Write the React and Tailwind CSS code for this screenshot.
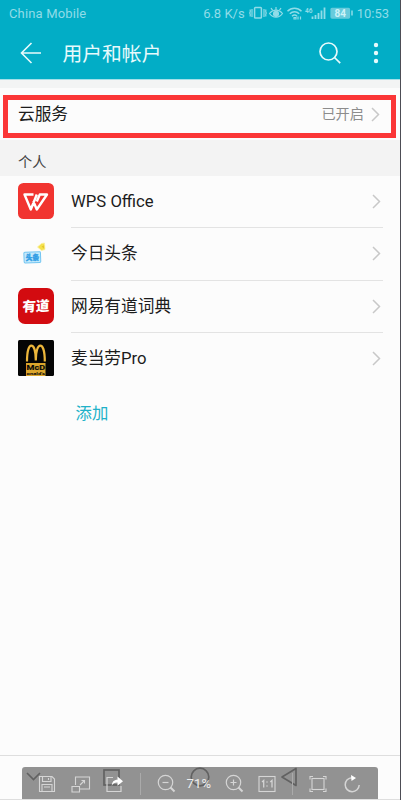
import { useState } from "react"

const WpsLogo = () => (
  <svg width="36" height="36" viewBox="0 0 36 36" fill="none">
    <rect width="36" height="36" rx="5.5" fill="#f13430" />
    <path
      d="M15.500 11.500H6.500L12.800 26.500L18.800 11.500M15.200 18L18.800 26.500L29 11.500H21.800L18.800 18.500"
      stroke="#fff"
      strokeWidth="2.4"
      strokeLinejoin="round"
    />
  </svg>
)

const ToutiaoLogo = () => (
  <svg width="36" height="36" viewBox="0 0 36 36" fill="none">
    <path d="M19.500 12l4-3.500 3-.5.500 6.500-3.500 1z" fill="#f5e14d" stroke="#f9efa0" strokeWidth="0.8" />
    <path d="M23.500 11.500l2.600-1.200v3.400z" fill="#e3c72c" />
    <rect x="6" y="17" width="16.600" height="10.800" rx="1" fill="#c4eafc" stroke="#73c5f1" transform="rotate(-2 14 22)" />
    <text x="7.800" y="25" fontSize="6.600" fontWeight="900" fill="#329ee5" stroke="#329ee5" strokeWidth="0.4">
      头条
    </text>
  </svg>
)

const YoudaoLogo = () => (
  <svg width="36" height="36" viewBox="0 0 36 36">
    <rect width="36" height="36" rx="7" fill="#d30b10" />
    <text x="4.500" y="23" fontSize="13.600" fontWeight="900" fill="#fff" transform="rotate(-2 18 18) skewX(-4) translate(1.200 0)">
      有道
    </text>
  </svg>
)

const McLogo = () => (
  <svg width="36" height="36" viewBox="0 0 36 36">
    <rect width="36" height="36" rx="1.5" fill="#050505" />
    <path
      d="M9 21.500C9 11 10.800 5.600 13.300 5.600S17.800 11 17.800 20.500C17.800 11 19.800 5.600 22.300 5.600S26.800 11 26.800 21.500"
      fill="none"
      stroke="#edb73b"
      strokeWidth="2.2"
    />
    <rect x="8" y="23" width="19.500" height="13" fill="#dca62c" />
    <text x="8.600" y="29.700" fontSize="7.300" fontWeight="700" fill="#080808" stroke="#080808" strokeWidth="0.2" textLength="18.400" lengthAdjust="spacingAndGlyphs">
      McD
    </text>
    <text x="8.600" y="35.300" fontSize="4.200" fontWeight="700" fill="#080808" textLength="18.400" lengthAdjust="spacingAndGlyphs">
      onald's
    </text>
  </svg>
)

const accounts = [
  { id: "wps", name: "WPS Office", Logo: WpsLogo },
  { id: "toutiao", name: "今日头条", Logo: ToutiaoLogo },
  { id: "youdao", name: "网易有道词典", Logo: YoudaoLogo },
  { id: "mc", name: "麦当劳Pro", Logo: McLogo },
]

const Chevron = () => (
  <svg width="9" height="15" viewBox="0 0 9 15" fill="none" stroke="#c8c8c8" strokeWidth="1.5" className="shrink-0">
    <path d="M1 1l6.500 6.500L1 14" />
  </svg>
)

function StatusBar() {
  return (
    <div className="flex h-[26px] items-center pl-[9px] pr-[11px] text-[13px] leading-none text-[#90dce8]">
      <span className="tracking-[0.15px]">China Mobile</span>
      <span className="ml-auto">6.8 K/s</span>
      {/* Vibrate, eye comfort, wifi, signal and battery */}
      <svg width="105" height="18" viewBox="0 0 105 18" className="ml-[4px] mr-[3px]" fill="none" stroke="currentColor" strokeWidth="1.2">
        <rect x="5.600" y="3.500" width="6.800" height="10.500" rx="0.800" strokeWidth="1.5" />
        <path d="M3 5v8M15 5v8M1.200 5.500v2.500l-.5 1 .5 1v2.500M16.800 5.500v2.500l.5 1-.5 1v2.500" />
        <path d="M20.500 9.500c3.500-4.500 9.500-4.500 13 0-3.500 5-9.500 5-13 0z" />
        <circle cx="27" cy="9.800" r="2.500" fill="currentColor" />
        <path d="M27 3v3M22 4l1.600 2.400M32 4l-1.600 2.400" />
        <path d="M38.500 7.300c4-4 10-4 14 0M40.800 9.800c2.800-2.800 6.700-2.800 9.400 0M43 12.200c1.600-1.500 3.500-1.500 5 0" strokeWidth="1.5" />
        <path d="M45 13.500h2v1.500h-2zM49 12.500v3M51.500 12.500v3" />
        <text x="56" y="8.800" fontSize="6.500" fontWeight="700" fill="currentColor" stroke="none">46</text>
        <path d="M63.500 12.500v2.500M66.500 11v4M69.500 9v6M72.500 6.500v8.500M75.500 3.500v11.500" strokeWidth="1.8" />
        <rect x="82" y="4.300" width="18.500" height="9.800" rx="1" fill="#68cbdc" stroke="#68cbdc" />
        <path d="M103 6.500v5" strokeWidth="1.5" />
        <text x="85.500" y="12.700" fontSize="10" fontWeight="700" fill="#cef3f8" stroke="none">84</text>
      </svg>
      <span>10:53</span>
    </div>
  )
}

function TitleBar() {
  return (
    <div className="flex h-[53px] items-center pl-[20px] text-[#e7fafc]">
      <svg width="22" height="22" viewBox="0 0 22 22" fill="none" stroke="currentColor" strokeWidth="1.6">
        <path d="M11.500 1L1.500 11l10 10M1.500 11H21" />
      </svg>
      <h1 className="mt-[5px] ml-[20.5px] text-[19.8px] leading-none font-normal">用户和帐户</h1>
      <svg width="22" height="22" viewBox="0 0 22 22" fill="none" stroke="currentColor" strokeWidth="1.7" className="ml-auto">
        <circle cx="9.500" cy="9.500" r="8.500" />
        <path d="M15.500 15.500l5.700 5.700" />
      </svg>
      <svg width="6" height="22" viewBox="0 0 6 22" fill="currentColor" className="mr-[21.5px] ml-[32px]">
        <circle cx="3" cy="3" r="2.200" />
        <circle cx="3" cy="11" r="2.200" />
        <circle cx="3" cy="19" r="2.200" />
      </svg>
    </div>
  )
}

function ViewerToolbar({ zoom }) {
  return (
    <div className="absolute top-[11px] left-[22px] flex h-[32px] w-[356px] items-center rounded-t-[3px] bg-black/42 pt-px text-[#d5d5d5]">
      <svg width="18" height="18" viewBox="0 0 18 18" fill="none" stroke="currentColor" strokeWidth="1.1" className="ml-[16px]">
        <path d="M1.500 1.500h12.500l2.500 2.500v12.500h-15zM4.500 1.500v5h8.500v-5M4 16.500v-7h10v7M10.500 3v2M6 12h6" />
      </svg>
      <svg width="20" height="18" viewBox="0 0 20 18" fill="none" stroke="currentColor" strokeWidth="1.1" className="ml-[15px]">
        <path d="M4.500 10V2h14v12h-10M1 11.500h7.500v5.500H1zM9 10l4.500-4.500M10.500 5.500h3v3" />
      </svg>
      <svg width="19" height="19" viewBox="0 0 19 19" fill="none" stroke="currentColor" strokeWidth="1.2" className="ml-[14px]">
        <path d="M8 3.500H2v14h14V12" />
        <path d="M6.800 12c.2-4 2-6.200 5.700-6.200V2.500l5.500 4.700-5.500 4.600V8.600c-2.800 0-4.700.8-5.700 3.400z" fill="#fff" stroke="none" />
      </svg>
      <div className="ml-[16px] h-[22px] w-px bg-[#aaa]" />
      <svg width="19" height="19" viewBox="0 0 19 19" fill="none" stroke="currentColor" strokeWidth="1.2" className="ml-[15.5px]">
        <circle cx="8.500" cy="8.500" r="7.200" />
        <path d="M5.500 8.500h6" />
        <path d="M13.500 13.500l4 4" strokeWidth="2" />
      </svg>
      <span className="ml-[11px] w-[27px] text-[13px] leading-none tracking-[0.2px] text-[#eee]">{zoom}</span>
      <svg width="19" height="19" viewBox="0 0 19 19" fill="none" stroke="currentColor" strokeWidth="1.2" className="ml-[11px]">
        <circle cx="8.500" cy="8.500" r="7.200" />
        <path d="M5.500 8.500h6M8.500 5.500v6" />
        <path d="M13.500 13.500l4 4" strokeWidth="2" />
      </svg>
      <svg width="18" height="18" viewBox="0 0 18 18" fill="none" stroke="currentColor" strokeWidth="1.1" className="ml-[14.5px]">
        <rect x="1" y="1.500" width="16" height="15" />
        <path d="M4 7l1.700-1.500v7M12.300 7L14 5.500v7M8.500 7h1M8.500 11h1" strokeWidth="1.3" />
      </svg>
      <div className="ml-[16px] h-[22px] w-px bg-[#aaa]" />
      <svg width="18" height="18" viewBox="0 0 18 18" fill="none" stroke="currentColor" strokeWidth="1.1" className="ml-[15.5px]">
        <path d="M1 4.500V1.500h3M14 1.500h3v3M17 13.500v3h-3M4 16.500H1v-3" />
        <rect x="3" y="3.500" width="12" height="11" />
      </svg>
      <svg width="18" height="18" viewBox="0 0 18 18" fill="none" stroke="currentColor" strokeWidth="1.5" className="ml-[16px]">
        <path d="M9 2.700A7 7 0 1 0 16.200 10" />
        <path d="M8 0l5 3-4.500 3z" fill="#fff" stroke="none" />
      </svg>
    </div>
  )
}

function NavBar() {
  return (
    <div className="relative flex h-[45px] items-start border-y border-[#dedede] text-[#a8a8a8]">
      <svg width="16" height="10" viewBox="0 0 16 10" fill="none" stroke="currentColor" strokeWidth="1.7" className="mt-[16px] ml-[26px]">
        <path d="M1 1l6.500 6.500L14 1" />
      </svg>
      <svg width="18" height="18" viewBox="0 0 18 18" fill="none" stroke="currentColor" strokeWidth="1.7" className="mt-[13px] ml-[61px]">
        <rect x="1" y="1" width="15" height="15" />
      </svg>
      <svg width="20" height="20" viewBox="0 0 20 20" fill="none" stroke="currentColor" strokeWidth="1.7" className="mt-[11px] ml-[69px]">
        <circle cx="10" cy="10" r="8.800" />
      </svg>
      <svg width="18" height="20" viewBox="0 0 18 20" fill="none" stroke="currentColor" strokeWidth="1.7" strokeLinejoin="round" className="mt-[11px] ml-[70px]">
        <path d="M16 1.500v17L2 10z" />
      </svg>
      <ViewerToolbar zoom="71%" />
    </div>
  )
}

export default function App() {
  const [cloudEnabled] = useState(true)

  return (
    <div className="flex h-[800px] w-[401px] flex-col border-r border-[#4d4d55] bg-[#fcfcfc] font-[Roboto,'Noto_Sans_CJK_SC',sans-serif] text-[#1c1c1c]">
      <header className="h-[80px] border-b border-[#a5e0e9] bg-[#02adc6]">
        <StatusBar />
        <TitleBar />
      </header>

      <main className="flex-1">
        <div className="h-[8px] bg-[#f3f4f4]" />

        {/* Cloud service */}
        <section className="h-[52px] pt-[7px] pr-[4.5px] pl-[3px]">
          <div className="flex h-[43px] items-center border-5 border-[#fb3637] pr-[10.5px] pb-[5px] pl-[10px]">
            <span className="mt-[3px] text-[16.7px] leading-none">云服务</span>
            <span className="mr-[7px] ml-auto text-[14.2px] leading-none text-[#8c8c8c]">{cloudEnabled ? "已开启" : "已关闭"}</span>
            <Chevron />
          </div>
        </section>

        <h2 className="flex h-[36px] items-center bg-[#f3f3f3] pt-[9px] pl-[18px] text-[14.2px] leading-none font-normal text-[#444]">个人</h2>

        {/* Accounts */}
        <ul className="pl-[17.5px]">
          {accounts.map(({ id, name, Logo }) => (
            <li key={id} className="group flex h-[52.3px]">
              <div className="mt-[7px] h-[36px] w-[36px] shrink-0">
                <Logo />
              </div>
              <div className="mr-[17.5px] ml-[17.5px] flex flex-1 items-center border-b-[1.5px] border-[#e3e3e3] pr-[2px] group-last:border-transparent">
                <span className="mt-[1.5px] text-[16.7px] leading-none">{name}</span>
                <span className="ml-auto">
                  <Chevron />
                </span>
              </div>
            </li>
          ))}
        </ul>

        <button className="mt-[20.5px] ml-[75.5px] block text-[16.4px] leading-none text-[#20b1c8]">添加</button>
      </main>

      <NavBar />
    </div>
  )
}
